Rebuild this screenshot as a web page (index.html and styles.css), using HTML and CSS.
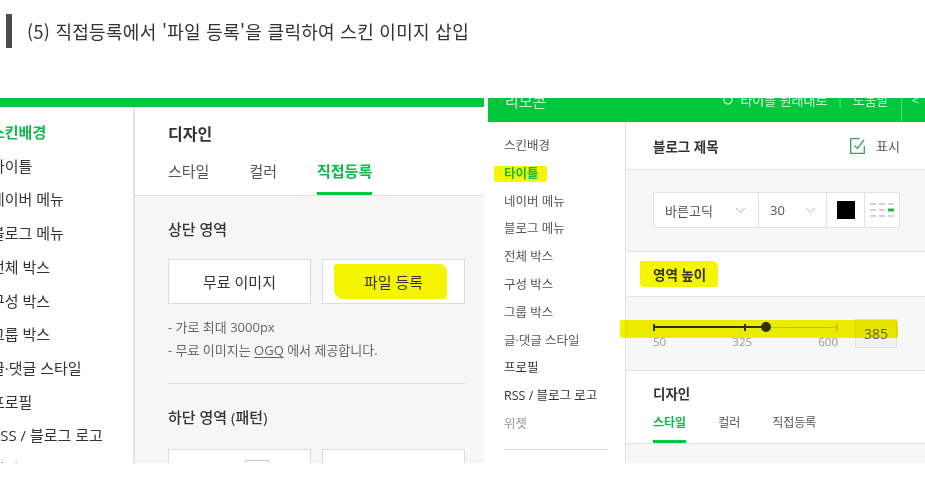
FILE: index.html
```html
<!DOCTYPE html>
<html lang="ko">
<head>
  <meta charset="UTF-8" />
  <meta name="viewport" content="width=device-width, initial-scale=1.0"/>
  <title>스킨 이미지 삽입</title>
  <link rel="stylesheet" href="styles.css">
</head>
<body>

  <h3 class="post-title">(5) 직접등록에서 '파일 등록'을 클릭하여 스킨 이미지 삽입</h3>

  <div class="shots">

    <!-- 캡처 1 : 직접등록 탭 -->
    <div class="shot shot-a">
      <div class="topbar"></div>
      <div class="shot-body">
        <ul class="side side-a">
          <li class="on">스킨배경</li>
          <li>타이틀</li>
          <li>네이버 메뉴</li>
          <li>블로그 메뉴</li>
          <li>전체 박스</li>
          <li>구성 박스</li>
          <li>그룹 박스</li>
          <li>글·댓글 스타일</li>
          <li>프로필</li>
          <li>RSS / 블로그 로고</li>
          <li>위젯</li>
        </ul>

        <div class="panel">
          <div class="panel-head">
            <h4>디자인</h4>
            <div class="tabs">
              <span>스타일</span>
              <span>컬러</span>
              <span class="on">직접등록</span>
            </div>
          </div>

          <div class="panel-content">
            <h5>상단 영역</h5>
            <div class="btn-row">
              <div class="btn">무료 이미지</div>
              <div class="btn"><span class="marker">파일 등록</span></div>
            </div>
            <p class="note first">- 가로 최대 3000px</p>
            <p class="note">- 무료 이미지는 <u>OGQ</u> 에서 제공합니다.</p>
            <hr>
            <h5>하단 영역 (패턴)</h5>
            <div class="btn-row low">
              <div class="btn">컬러 <i class="swatch"></i></div>
              <div class="btn">파일 등록</div>
            </div>
          </div>
        </div>
      </div>
    </div>

    <!-- 캡처 2 : 타이틀 영역 높이 -->
    <div class="shot shot-b">
      <div class="topbar">
        <span class="cut logo">리모콘</span>
        <div class="tools">
          <svg class="cut-icon" width="12" height="12" viewBox="0 0 12 12"><path d="M2.2 4.5A4 4 0 1 0 6 2H4" fill="none" stroke="currentColor" stroke-width="1.3"/><path d="M5 0L3 2l2 2" fill="none" stroke="currentColor" stroke-width="1.3"/></svg>
          <span class="cut">타이틀 원래대로</span>
          <span class="cut bar">|</span>
          <span class="cut">도움말</span>
          <i class="vline"></i>
          <span class="cut">&lt;</span>
        </div>
      </div>

      <div class="shot-body">
        <ul class="side side-b">
          <li>스킨배경</li>
          <li class="on"><span class="marker">타이틀</span></li>
          <li>네이버 메뉴</li>
          <li>블로그 메뉴</li>
          <li>전체 박스</li>
          <li>구성 박스</li>
          <li>그룹 박스</li>
          <li>글·댓글 스타일</li>
          <li class="dark">프로필</li>
          <li class="dark">RSS / 블로그 로고</li>
          <li class="dim">위젯</li>
          <li class="rule"></li>
        </ul>

        <div class="panel">
          <div class="sec sec-title">
            <span>블로그 제목</span>
            <span class="show">
              <svg width="16" height="16" viewBox="0 0 16 16"><path d="M14.3 8v7.3H.7V.7h9" fill="none" stroke="#3a9f5c" stroke-width="1.3"/><path d="M4.5 7.5l3 3 6.5-8.5" fill="none" stroke="#3a9f5c" stroke-width="1.3"/></svg>
              표시
            </span>
          </div>

          <div class="sec sec-font">
            <div class="font-ctrl">
              <div class="cell face">바른고딕 <svg width="11" height="7" viewBox="0 0 11 7"><path d="M1 1l4.5 4.5L10 1" fill="none" stroke="#bbb"/></svg></div>
              <div class="cell size">30 <svg width="11" height="7" viewBox="0 0 11 7"><path d="M1 1l4.5 4.5L10 1" fill="none" stroke="#bbb"/></svg></div>
              <div class="cell color"><i class="chip"></i></div>
              <div class="cell align">
                <svg width="24" height="15" viewBox="0 0 24 15">
                  <rect x="0" y="0" width="6" height="2" fill="#d4d4d4"/>
                  <rect x="9" y="0" width="6" height="2" fill="#d4d4d4"/>
                  <rect x="18" y="0" width="6" height="2" fill="#d4d4d4"/>
                  <rect x="0" y="6" width="6" height="2" fill="#d4d4d4"/>
                  <rect x="9" y="6" width="6" height="2" fill="#d4d4d4"/>
                  <rect x="18" y="5.5" width="6" height="3" fill="#2bb44c"/>
                  <rect x="0" y="12" width="6" height="2" fill="#d4d4d4"/>
                  <rect x="9" y="12" width="6" height="2" fill="#d4d4d4"/>
                  <rect x="18" y="12" width="6" height="2" fill="#d4d4d4"/>
                </svg>
              </div>
            </div>
          </div>

          <div class="sec sec-height">
            <span class="marker">영역 높이</span>
          </div>

          <div class="sec sec-slider">
            <div class="slider">
              <div class="track">
                <i class="fill"></i>
                <i class="rest"></i>
                <i class="tick t0"></i>
                <i class="tick t1"></i>
                <i class="tick t2"></i>
                <i class="knob"></i>
              </div>
              <div class="scale"><span>50</span><span>325</span><span>600</span></div>
            </div>
            <div class="num-box">385</div>
          </div>

          <div class="sec sec-design">
            <h4>디자인</h4>
            <div class="tabs small">
              <span class="on">스타일</span>
              <span>컬러</span>
              <span>직접등록</span>
            </div>
          </div>

          <div class="sec-rest"></div>
        </div>

        <div class="hl-slider"></div>
      </div>
    </div>

  </div>

</body>
</html>
```

FILE: styles.css
```css
:root {
  --green: #00c73c;
  --green-text: #10b84a;
  --marker: #f5f500;
  --line: #e2e2e2;
  --soft: #f6f6f6;
}

body {
  margin: 0;
  height: 480px;
  overflow: hidden;
  background: #fff;
  color: #333;
  font-family: "Open Sans", "Noto Sans CJK KR", sans-serif;
}

/* Post heading */
.post-title {
  margin: 14px 0 0 6px;
  padding-left: 15px;
  border-left: 6px solid #4d4d4d;
  font-family: "Noto Sans CJK KR", sans-serif;
  font-size: 18px;
  font-weight: 400;
  letter-spacing: 0.3px;
  line-height: 34px;
  color: #333;
}

/* Screenshot row */
.shots {
  display: flex;
  gap: 4px;
  margin-top: 50px;
  height: 365px;
}

.shot {
  flex-shrink: 0;
  display: flex;
  flex-direction: column;
  overflow: hidden;
  background: #fff;
}

.shot-a { width: 484px; }
.shot-b { width: 437px; }

.shot-body {
  flex: 1;
  display: flex;
  min-height: 0;
  position: relative;
}

.side {
  list-style: none;
  margin: 0;
  flex-shrink: 0;
  box-sizing: border-box;
  white-space: nowrap;
}

.panel {
  flex: 1;
  min-width: 0;
  display: flex;
  flex-direction: column;
}

.marker {
  background: var(--marker);
}

/* ---------- Shot A ---------- */
.shot-a .topbar {
  height: 9px;
  background: var(--green);
}

.side-a {
  width: 135px;
  padding: 9px 0 0;
  border-right: 2px solid #e4e4e4;
  font-size: 15px;
  line-height: 33.7px;
  color: #333;
}

.side-a li {
  margin-left: -9px;
}

.side-a li.on {
  color: var(--green-text);
  font-weight: 700;
}

.panel-head {
  padding-left: 33px;
  border-bottom: 1px solid #e3e3e3;
  background: #fff;
}

.panel-head h4 {
  margin: 16px 0 0;
  font-size: 16px;
  line-height: 22px;
  font-weight: 700;
}

.tabs {
  display: flex;
  gap: 40px;
  margin-top: 15px;
  font-size: 15px;
  line-height: 22px;
  color: #555;
}

.tabs span {
  padding-bottom: 10px;
  border-bottom: 3px solid transparent;
}

.tabs .on {
  color: var(--green-text);
  font-weight: 700;
  border-bottom-color: var(--green);
}

.panel-content {
  flex: 1;
  background: var(--soft);
  padding: 0 19px 0 33px;
}

.panel-content h5 {
  margin: 22px 0 0;
  font-size: 15px;
  font-weight: 500;
  line-height: 22px;
  color: #333;
}

.btn-row {
  display: grid;
  grid-template-columns: 1fr 1fr;
  gap: 11px;
  margin-top: 19px;
}

.btn-row.low {
  margin-top: 21px;
}

.btn {
  height: 45px;
  box-sizing: border-box;
  display: flex;
  align-items: center;
  justify-content: center;
  background: #fff;
  border: 1px solid #dcdcdc;
  font-size: 15px;
  color: #333;
}

.btn .marker {
  padding: 7px 24px 7px 30px;
  margin-left: -6px;
  border-radius: 3px 7px 4px 9px;
}

.swatch {
  display: inline-block;
  width: 22px;
  height: 22px;
  margin-left: 8px;
  border: 1px solid #ccc;
  background: #fff;
}

.note {
  margin: 0;
  font-size: 13px;
  line-height: 23px;
  color: #666;
}

.note.first {
  margin-top: 12px;
}

.note u {
  text-underline-offset: 2px;
}

.panel-content hr {
  margin: 21px 0 0;
  border: 0;
  border-top: 1px solid #dedede;
}

/* ---------- Shot B ---------- */
.shot-b .topbar {
  height: 24px;
  flex-shrink: 0;
  display: flex;
  align-items: flex-start;
  overflow: hidden;
  background: var(--green);
  color: rgba(255, 255, 255, 0.82);
}

.cut {
  line-height: 24px;
  margin-top: -10px;
}

.logo {
  padding-left: 17px;
  font-size: 15px;
  margin-top: -9px;
}

.tools {
  margin-left: auto;
  padding-right: 6px;
  display: flex;
  align-items: flex-start;
  gap: 6px;
  font-size: 13px;
}

.cut-icon {
  margin-top: -4px;
}

.tools .bar {
  margin: -10px 3px 0;
  opacity: 0.5;
}

.vline {
  width: 1px;
  height: 24px;
  margin: 0 4px 0 6px;
  background: rgba(255, 255, 255, 0.35);
}

.side-b {
  width: 138px;
  padding: 10px 0 0 16px;
  border-right: 1px solid #e0e0e0;
  font-size: 12.5px;
  line-height: 27.8px;
  color: #555;
}

.side-b li.on {
  color: var(--green-text);
  font-weight: 700;
}

.side-b li.on .marker {
  display: inline-block;
  line-height: 16px;
  padding: 0 8px 0 10px;
  margin-left: -10px;
  border-radius: 2px;
}

.side-b li.dark { color: #333; }
.side-b li.dim { color: #999; }

.side-b li.rule {
  width: 104px;
  height: 1px;
  margin-top: 11px;
  background: #ddd;
}

.sec {
  box-sizing: border-box;
  padding: 0 25px 0 27px;
  border-bottom: 1px solid #e3e3e3;
}

.sec-title {
  height: 48px;
  display: flex;
  align-items: center;
  justify-content: space-between;
  font-size: 13.5px;
  font-weight: 700;
  color: #333;
  background: #fff;
}

.show {
  display: flex;
  align-items: center;
  gap: 10px;
  font-size: 13px;
  font-weight: 400;
  color: #555;
}

.sec-font {
  padding-top: 22px;
  padding-bottom: 23px;
  background: #f7f7f7;
}

.font-ctrl {
  display: flex;
  width: 247px;
  height: 36px;
  box-sizing: border-box;
  background: #fff;
  border: 1px solid var(--line);
}

.cell {
  display: flex;
  align-items: center;
  box-sizing: border-box;
  font-size: 13px;
  color: #555;
}

.cell + .cell {
  border-left: 1px solid var(--line);
}

.cell.face {
  width: 104px;
  justify-content: space-between;
  padding: 0 12px 0 11px;
}

.cell.size {
  width: 68px;
  justify-content: space-between;
  padding: 0 10px 0 11px;
}

.cell.color {
  width: 38px;
  justify-content: center;
}

.chip {
  width: 18px;
  height: 18px;
  background: #000;
}

.cell.align {
  flex: 1;
  justify-content: center;
}

.sec-height {
  height: 45px;
  display: flex;
  align-items: center;
  background: #fff;
  font-size: 13.5px;
  font-weight: 700;
}

.sec-height .marker {
  padding: 3px 12px 3px 13px;
  margin-left: -13px;
  border-radius: 2px 6px 3px 4px;
}

.sec-slider {
  height: 74px;
  display: flex;
  align-items: flex-start;
  padding-top: 22px;
  background: #f7f7f7;
}

.slider {
  width: 185px;
}

.track {
  position: relative;
  height: 16px;
}

.track i {
  position: absolute;
}

.track .fill {
  left: 0;
  top: 7px;
  width: 113px;
  height: 2px;
  background: #333;
}

.track .rest {
  left: 113px;
  right: 0;
  top: 7.5px;
  height: 1px;
  background: #ccc;
}

.track .tick {
  top: 4.5px;
  width: 2px;
  height: 7px;
  background: #333;
}

.track .t1 { left: 91px; }
.track .t2 { right: 0; background: #ccc; }

.track .knob {
  left: 108px;
  top: 3px;
  width: 10px;
  height: 10px;
  border-radius: 50%;
  background: #333;
}

.scale {
  display: flex;
  justify-content: space-between;
  font-size: 11.5px;
  line-height: 14px;
  color: #999;
}

.num-box {
  width: 42px;
  height: 29px;
  margin-left: 17px;
  box-sizing: border-box;
  display: flex;
  align-items: center;
  justify-content: center;
  border: 1px solid #e0e0e0;
  background: #f1f1f1;
  font-size: 14px;
  color: #666;
}

.sec-design {
  padding-top: 13px;
  background: #fff;
}

.sec-design h4 {
  margin: 0;
  font-size: 13.5px;
  font-weight: 700;
  line-height: 20px;
}

.tabs.small {
  gap: 32px;
  margin-top: 10px;
  font-size: 12px;
  line-height: 18px;
}

.tabs.small span {
  padding-bottom: 8px;
}

.sec-rest {
  flex: 1;
  background: #f7f7f7;
}

/* marker stroke laid over the slider */
.hl-slider {
  position: absolute;
  left: 132px;
  top: 198px;
  width: 278px;
  height: 18px;
  background: #f3f300;
  mix-blend-mode: multiply;
  border-radius: 2px 4px 2px 3px;
}
```
